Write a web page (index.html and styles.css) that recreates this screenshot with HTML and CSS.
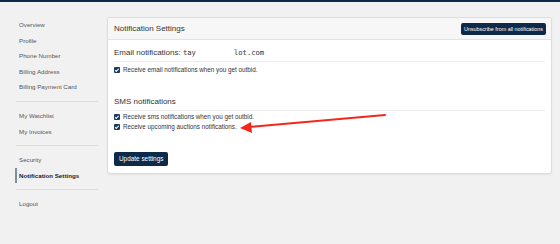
FILE: index.html
```html
<!DOCTYPE html>
<html lang="en">
<head>
  <meta charset="UTF-8">
  <title>Notification Settings</title>
  <link rel="stylesheet" href="styles.css">
</head>
<body>
  <div class="topbar"></div>

  <div class="page">
    <!-- Menu du compte -->
    <nav class="sidebar">
      <a class="nav-item" href="#">Overview</a>
      <a class="nav-item" href="#">Profile</a>
      <a class="nav-item" href="#">Phone Number</a>
      <a class="nav-item" href="#">Billing Address</a>
      <a class="nav-item" href="#">Billing Payment Card</a>
      <div class="sep"></div>
      <a class="nav-item" href="#">My Watchlist</a>
      <a class="nav-item" href="#">My Invoices</a>
      <div class="sep"></div>
      <a class="nav-item" href="#">Security</a>
      <a class="nav-item active" href="#">Notification Settings</a>
      <div class="sep"></div>
      <a class="nav-item" href="#">Logout</a>
    </nav>

    <div class="card">
      <div class="card-header">
        <span class="card-title">Notification Settings</span>
        <a class="btn btn-small" href="#">Unsubscribe from all notifications</a>
      </div>

      <div class="card-body">
        <h3 class="section-title">Email notifications: <span class="mono">tay<span class="hidden-part"></span>lot.com</span></h3>
        <label class="check"><span class="box"></span>Receive email notifications when you get outbid.</label>

        <h3 class="section-title sms">SMS notifications</h3>
        <label class="check"><span class="box"></span>Receive sms notifications when you get outbid.</label>
        <label class="check"><span class="box"></span>Receive upcoming auctions notifications.</label>

        <a class="btn btn-update" href="#">Update settings</a>

        <!-- fleche rouge -->
        <svg class="arrow" width="160" height="24" viewBox="0 0 160 24">
          <line x1="146" y1="3" x2="10" y2="15" stroke="#f2281a" stroke-width="2" stroke-linecap="round"/>
          <polygon points="1,16 12,10 13,21" fill="#f2281a"/>
        </svg>
      </div>
    </div>
  </div>
</body>
</html>
```

FILE: styles.css
```css
body {
  margin: 0;
  background: #f1f1f1;
  font-family: "Liberation Sans", Arial, sans-serif;
  color: #333;
  height: 244px;
  overflow: hidden;
}

.topbar {
  height: 2px;
  background: #0d2a4a;
}

.page {
  display: flex;
  align-items: flex-start;
  padding: 15px 8px 0 15px;
  gap: 9px;
}

.sidebar {
  width: 83px;
  display: flex;
  flex-direction: column;
}

.nav-item {
  display: block;
  font-size: 6.2px;
  line-height: 15.6px;
  color: #555;
  text-decoration: none;
  padding-left: 2px;
  border-left: 2px solid transparent;
}

.nav-item.active {
  font-weight: bold;
  color: #222;
  border-left-color: #7d8ea3;
}

.sep {
  height: 1px;
  background: #dcdcdc;
  margin: 6px 0 6px 1px;
}

.card {
  flex: 1;
  background: #fff;
  border: 1px solid #ddd;
  border-radius: 3px;
  box-shadow: 0 1px 2px rgba(0, 0, 0, 0.06);
}

.card-header {
  display: flex;
  align-items: center;
  justify-content: space-between;
  height: 21px;
  padding: 0 5px 0 6px;
  background: #f7f7f7;
  border-bottom: 1px solid #e3e3e3;
  border-radius: 3px 3px 0 0;
}

.card-title {
  font-size: 8px;
  color: #333;
}

.btn {
  display: inline-block;
  background: #0d2a4a;
  color: #fff;
  text-decoration: none;
  border-radius: 2px;
}

.btn-small {
  font-size: 5.4px;
  padding: 3px 3px;
  line-height: 6px;
}

.card-body {
  position: relative;
  padding: 8px 6px 7px 6px;
}

.section-title {
  font-size: 8px;
  font-weight: normal;
  margin: 0 0 3px;
  padding-bottom: 3px;
  border-bottom: 1px solid #ececec;
  line-height: 10px;
  color: #333;
}

.section-title.sms {
  margin-top: 22px;
  margin-bottom: 1px;
}

.mono {
  font-family: "DejaVu Sans Mono", monospace;
  font-size: 7.2px;
}

.hidden-part {
  display: inline-block;
  width: 38px;
}

.check {
  display: flex;
  align-items: center;
  font-size: 6.3px;
  line-height: 10px;
  color: #333;
}

.box {
  width: 6px;
  height: 6px;
  background: #1d3b5c;
  border-radius: 1px;
  margin-right: 3px;
  position: relative;
}

.box::after {
  content: "";
  position: absolute;
  left: 2px;
  top: 0.8px;
  width: 1.4px;
  height: 2.8px;
  border: solid #fff;
  border-width: 0 0.8px 0.8px 0;
  transform: rotate(45deg);
}

.btn-update {
  margin-top: 20px;
  font-size: 6.4px;
  padding: 4px 5px;
  line-height: 6px;
  border-radius: 2px;
}

.arrow {
  position: absolute;
  left: 131px;
  top: 72px;
}
```
